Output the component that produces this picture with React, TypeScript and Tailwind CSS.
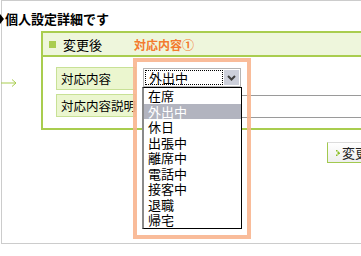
import React from 'react';

const options = ['在席', '外出中', '休日', '出張中', '離席中', '電話中', '接客中', '退職', '帰宅'];

const App: React.FC = () => {
  const selected = '外出中';

  return (
    <div className="relative w-[361px] h-[256px] overflow-hidden bg-white text-black font-['Noto_Sans_CJK_JP','Liberation_Sans',sans-serif]">
      {/* outer panel */}
      <div className="ml-[1px] w-[420px] h-[244px] border border-[#cccccc]">
        {/* title */}
        <div className="h-[30px] pt-[10px] flex items-start">
          <svg width="4" height="10" viewBox="0 0 4 10" className="-ml-[2px] mt-[3px]">
            <path d="M0 0 L4 5 L0 10 Z" fill="#000" />
          </svg>
          <span className="ml-[1px] text-[13px] leading-[15px] font-bold">個人設定詳細です</span>
        </div>

        {/* green box */}
        <div className="ml-[39px] border-2 border-r-0 border-[#a9cd4f]">
          <div className="h-[24px] bg-[#eef6dc] border-b-2 border-[#a9cd4f] flex items-center pl-[6px]">
            <div className="w-[7px] h-[7px] bg-[#a9cd4f]" />
            <span className="ml-[7px] text-[13px] leading-[15px]">変更後</span>
          </div>
          <div className="h-[71px] pl-[13px] pt-[10px] flex flex-col gap-[4px]">
            <div className="flex items-start">
              <div className="w-[80px] h-[23px] border border-[#c8e196] bg-[#ebf6cf] pl-[4px] text-[12.5px] leading-[21px] whitespace-nowrap">対応内容</div>
              <div className="ml-[7px] mt-[1px] w-[98px] h-[19px] border border-[#b4b4b4] flex p-[1px] bg-white">
                <div className="flex-1 border border-dotted border-black text-[13px] leading-[13px] pl-[3px]">{selected}</div>
                <div className="w-[15px] ml-[1px] bg-[#cdd0db] flex items-center justify-center">
                  <svg width="9" height="6" viewBox="0 0 9 6">
                    <path d="M1 1 L4.5 4.5 L8 1" stroke="#404040" strokeWidth="2" fill="none" />
                  </svg>
                </div>
              </div>
            </div>
            <div className="flex items-start">
              <div className="w-[80px] h-[23px] border border-[#c8e196] bg-[#ebf6cf] pl-[4px] text-[12.5px] leading-[21px] whitespace-nowrap overflow-visible">対応内容説明</div>
              <div className="ml-[7px] mt-[1px] w-[300px] h-[23px] border border-[#9a9a9a] bg-white" />
            </div>
          </div>
        </div>

        {/* button */}
        <div className="mt-[12px] ml-[325px] w-[80px] h-[21px] border border-[#dcdcdc] border-l-[#a2c94f] border-b-[#a2c94f] bg-gradient-to-b from-white to-[#eeeeee] flex items-center">
          <svg width="4" height="6" viewBox="0 0 4 6" className="ml-[8px]">
            <rect x="0" y="0" width="1.5" height="1.5" fill="#8cbf26" />
            <rect x="1.5" y="1.5" width="1.5" height="1.5" fill="#8cbf26" />
            <rect x="2.5" y="2.5" width="1.5" height="1.5" fill="#8cbf26" />
            <rect x="1.5" y="3" width="1.5" height="1.5" fill="#8cbf26" />
            <rect x="0" y="4.5" width="1.5" height="1.5" fill="#8cbf26" />
          </svg>
          <span className="ml-[2px] text-[13px] leading-[15px] text-[#222]">変更</span>
        </div>
      </div>

      {/* green arrow */}
      <svg width="20" height="10" viewBox="0 0 20 10" className="absolute left-0 top-[78px]">
        <path d="M1 5 H16 M12 1.5 L16 5 L12 8.5" stroke="#a9cd4f" strokeWidth="1" fill="none" />
      </svg>

      {/* annotation */}
      <div className="absolute left-[134px] top-[38px] text-[12px] leading-[14px] font-bold text-[#f47a2e]">対応内容①</div>
      <div className="absolute left-[133px] top-[58px] w-[118px] h-[181px] border-4 border-[#f8b58f]/90" />

      {/* dropdown list */}
      <div className="absolute left-[142px] top-[87px] w-[100px] border border-black border-l-2 border-l-[#8a8a8a] bg-white">
        {options.map((o) => (
          <div
            key={o}
            className={`h-[15.5px] pl-[4px] text-[13px] leading-[15.5px] ${o === selected ? 'bg-[#b2b4bf] text-white' : 'text-black'}`}
          >
            {o}
          </div>
        ))}
      </div>
    </div>
  );
};

export default App;
